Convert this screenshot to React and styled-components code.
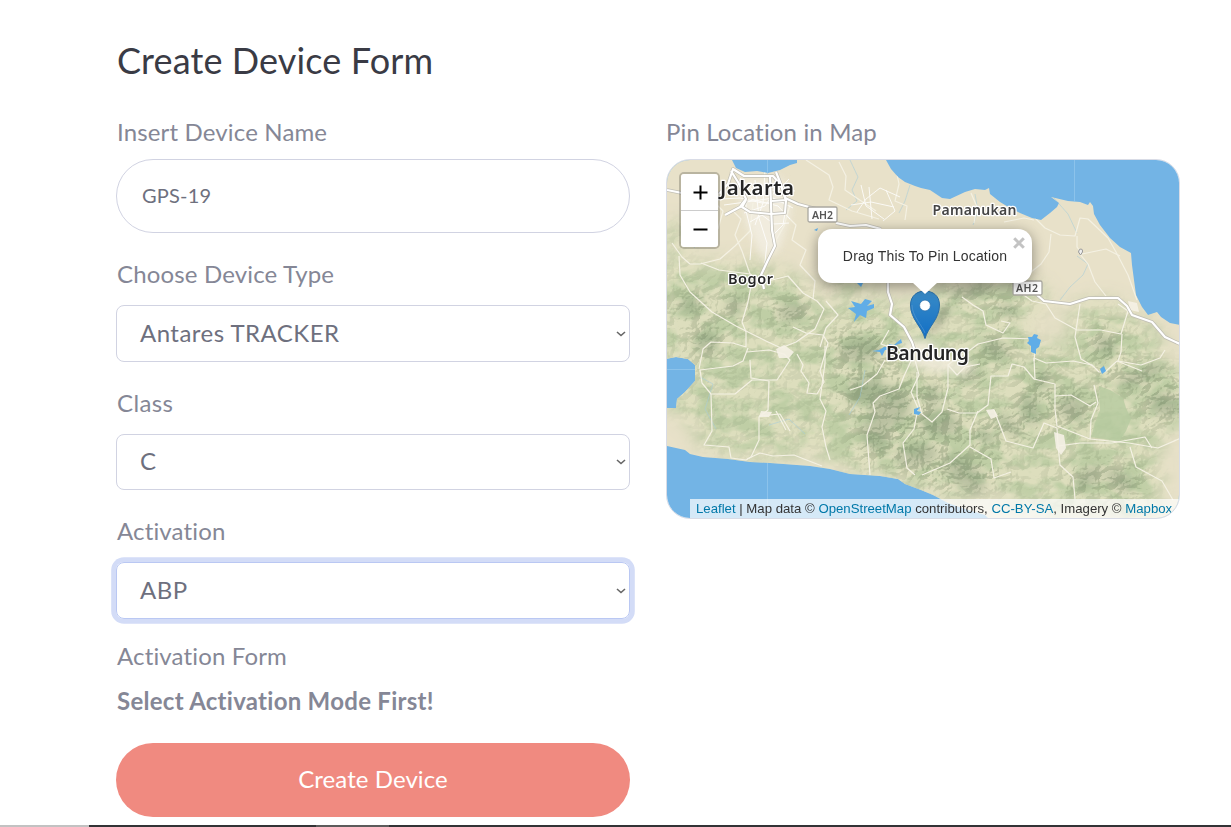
import React from "react";
import styled, { createGlobalStyle, css } from "styled-components";

const GlobalStyle = createGlobalStyle`
  * { box-sizing: border-box; }
  body { margin: 0; background: #fff; overflow: hidden; font-family: Lato, "Open Sans", sans-serif; }
`;

const Page = styled.div`
  display: flex;
  flex-direction: column;
  height: 827px;
  width: 1231px;
`;
const Main = styled.main`
  flex: 1;
  padding: 40px 51px 0 116px;
`;
const Title = styled.h1`
  margin: 0 0 39px;
  padding-left: 1px;
  font-size: 36px;
  line-height: 40px;
  font-weight: 400;
  letter-spacing: 0.12px;
  color: #3a3b45;
`;
const Columns = styled.div`
  display: grid;
  grid-template-columns: 514px 514px;
  column-gap: 36px;
  align-items: start;
`;
const Field = styled.div`
  display: flex;
  flex-direction: column;
  margin-bottom: ${(p) => p.$gap || 0}px;
`;
const Label = styled.label`
  padding: 0 0 2px ${(p) => p.$inset ?? 1}px;
  font-size: 24px;
  line-height: 26px;
  margin-bottom: ${(p) => p.$space ?? 16}px;
  letter-spacing: ${(p) => p.$track ?? 0.15}px;
  color: #858796;
`;
const NameInput = styled.input`
  height: 74px;
  border: 1px solid #d1d3e2;
  border-radius: 37px;
  padding: 0 24px 3px 25px;
  font: 400 20px Lato, sans-serif;
  letter-spacing: 0.2px;
  color: #6e707e;
  outline: none;
`;
const SelectBox = styled.div`
  display: flex;
  align-items: center;
  justify-content: space-between;
  height: ${(p) => p.$height}px;
  border: 1px solid #d1d3e2;
  border-radius: 8px;
  padding: 0 3px 0 23px;
  font-size: 24px;
  letter-spacing: 0.47px;
  color: #6e707e;
  ${(p) => p.$focused && css`
    border-color: #bac8f3;
    box-shadow: 0 0 0 4.8px #d3dcf7;
  `}
`;
const SelectValue = styled.span`
  padding-bottom: 3px;
`;
const Message = styled.strong`
  padding-left: 1px;
  font-size: 24px;
  line-height: 28px;
  letter-spacing: 0.27px;
  font-weight: 700;
  color: #858796;
`;
const SubmitButton = styled.button`
  height: 74px;
  border: 0;
  border-radius: 37px;
  background: #f08a80;
  color: #fff;
  font: 400 24px Lato, sans-serif;
  letter-spacing: 0.08px;
  padding: 0 0 3px;
`;
const MapFrame = styled.div`
  position: relative;
  width: 514px;
  height: 360px;
  border: 1px solid #d9dce6;
  border-radius: 24px;
  overflow: hidden;
  font-family: "Liberation Sans", Arial, sans-serif;
`;
const MapDrawing = styled.svg`
  display: block;
`;
const ZoomControl = styled.div`
  position: absolute;
  left: 12px;
  top: 12px;
  width: 41px;
  border: 2px solid rgba(0, 0, 0, 0.2);
  background-clip: padding-box;
  border-radius: 5px;
  overflow: hidden;
`;
const ZoomButton = styled.button`
  display: flex;
  align-items: center;
  justify-content: center;
  width: 100%;
  height: ${(p) => (p.$first ? 37 : 36)}px;
  border: 0;
  border-bottom: ${(p) => (p.$first ? "1px solid #ccc" : "0")};
  background: #fff;
  padding: 0 0 0 1px;
`;
const Popup = styled.div`
  position: absolute;
  left: 151px;
  top: 69px;
  width: 214px;
  height: 54px;
  display: flex;
  align-items: center;
  justify-content: center;
  border-radius: 14px;
  background: #fff;
  box-shadow: 0 3px 14px rgba(0, 0, 0, 0.4);
  color: #333;
  font-size: 14px;
  letter-spacing: 0.18px;
  white-space: nowrap;
`;
const PopupTip = styled.svg`
  position: absolute;
  left: 94px;
  top: 53px;
`;
const CloseIcon = styled.svg`
  position: absolute;
  right: 7px;
  top: 8px;
`;
const Attribution = styled.div`
  position: absolute;
  right: 0;
  bottom: 0;
  width: 489px;
  height: 19px;
  padding: 0 0 0 6px;
  background: rgba(255, 255, 255, 0.7);
  color: #333;
  font-size: 13.2px;
  line-height: 19px;
  white-space: nowrap;
`;
const Credit = styled.a`
  color: #0078a8;
`;
const BottomEdge = styled.footer`
  display: grid;
  grid-template-columns: 89px 227px 73px 1fr;
  height: 2px;
`;
const EdgePart = styled.div`
  background: ${(p) => p.$tone};
`;

const LAND =
  "M660 150H732V160L736 168L745 172L757 171L768 173L780 170L790 165L797 163V150H886V160L891 169L898 177L905 182L915 186L921 188L930 190L942 198L950 199L965 192L975 189L985 190L989 188L990 194L1000 202L1010 208L1020 213L1032 218L1041 220L1050 213L1057 207L1059 203L1051 197L1068 201L1080 202L1088 205L1090 202L1093 206L1094 214L1100 225L1110 238L1120 247L1131 253L1132 265L1134 280L1136 295L1142 307L1148 315L1157 312L1161 317L1170 323L1185 326V530H1000L985 515L962 508L948 503L933 495L921 490L905 484L898 479L880 476L850 474L830 469L810 466L770 463L750 462L728 459L703 457L690 454L685 450L667 446L660 444V408H676L677 399L685 392L695 381V365L688 359L676 357L660 360Z";

const greens = [
  [700, 350, 45, 75], [735, 310, 85, 48], [675, 235, 20, 12], [680, 300, 30, 45],
  [780, 318, 38, 35], [850, 280, 22, 14], [875, 345, 65, 48], [960, 318, 48, 34],
  [985, 355, 62, 35], [1010, 300, 40, 20], [1050, 390, 65, 46], [1115, 345, 48, 32],
  [1105, 410, 75, 50], [955, 440, 90, 58], [875, 415, 75, 60], [750, 385, 72, 50],
  [760, 435, 65, 24], [835, 390, 45, 60], [1060, 462, 80, 50], [1130, 480, 32, 48],
  [1100, 320, 32, 20], [830, 335, 50, 30], [1160, 395, 45, 35],
];
const peaks = [
  [735, 306, 13, 10], [792, 312, 18, 13], [707, 342, 14, 16], [690, 305, 15, 10],
  [1007, 310, 12, 9], [1105, 345, 12, 16], [1042, 380, 10, 13], [1072, 408, 18, 17],
  [1030, 410, 12, 22], [985, 436, 12, 9], [970, 375, 13, 9], [932, 396, 10, 16],
  [1008, 425, 18, 9], [970, 292, 26, 9], [890, 407, 24, 31], [875, 435, 16, 24],
  [940, 423, 24, 18], [965, 474, 32, 18], [917, 455, 26, 16], [995, 349, 18, 12],
  [1140, 376, 32, 10], [1165, 405, 20, 16], [1088, 478, 20, 12], [860, 350, 26, 17],
  [1120, 480, 20, 12], [865, 390, 25, 18],
];

const trunkRoads = [
  "M667 190L682 193", "M719 194L728 184L733 169L744 176H773L781 185L785 198L798 204L820 210",
  "M725 215L740 207L746 199L738 182L731 171", "M746 200L742 207L750 212L771 214L785 213L786 200",
  "M770 175L771 205L772 230L775 246L768 260L761 275L764 289", "M772 201L786 200L780 182L776 172",
  "M836 223L850 226L866 225L881 229", "M888 281L888 292L892 304L890 315L904 327L912 342L915 351",
  "M1037 295L1044 301L1070 304L1089 298H1118L1127 306L1132 315L1152 322L1165 337L1182 345",
];
const roads = [
  "M672 243L682 257L690 264H700L720 259L735 246L750 231L753 203", "M679 256L680 275L690 292L712 312L736 326L766 341L781 348L796 342L815 329L824 309L817 301L803 293L788 276L764 282L750 274L719 270L701 263",
  "M751 286L748 302L742 322L746 332L746 347L733 343L711 342L703 349L699 369", "M748 348L743 361L733 366L700 370L702 383L711 394H735L752 380L777 380L790 360L784 354L769 350L747 352",
  "M750 360L751 378L769 381L768 410L759 417L759 440L751 457L746 460L731 458L729 447L704 445L712 431L711 394",
  "M776 411L786 430", "M759 416L780 414L790 431", "M797 354L803 365L801 371L809 383L807 393L817 394L824 382L820 371L828 343L823 335L806 333L793 327",
  "M825 346L825 363L822 385L820 399L826 411L822 427L826 447L830 460", "M747 459L760 453L773 456L794 455L804 459L822 466",
  "M889 330L881 344L900 351L911 361L904 376L899 389L880 396L873 403L875 412L867 435L870 475",
  "M915 360L919 375L911 392L918 408L914 429L903 443L907 468L915 475", "M917 372L917 397L922 414L932 422L942 412L948 388L948 365L957 375L965 367L980 364",
  "M947 409L959 413H977L988 405L991 376L1008 376L1012 364L1024 367L1034 379L1055 384L1055 409L1057 426L1090 439L1129 443L1158 448L1181 438",
  "M978 411L970 430L970 445L950 463L922 475", "M970 447L991 459L994 478L1011 472", "M994 410L1006 441L1033 448L1044 423L1057 428L1058 445L1060 465L1073 477L1075 499",
  "M1035 380L1034 358L1046 363L1073 361L1092 365L1099 372H1105L1117 361L1142 371", "M948 365L955 359L970 350L978 344L1003 338L1036 339L1034 361",
  "M962 297L973 305L983 311L986 325L1003 333L1010 323L1001 321", "M1021 293L1032 301L1046 304L1055 318L1077 330H1101L1121 334L1128 311L1118 304",
  "M1122 334L1121 352L1118 361L1141 365L1160 358L1165 350", "M1093 366L1081 359L1075 337L1080 304", "M1035 218L1045 228L1060 235L1075 236L1080 218L1088 219L1108 238L1116 252L1128 275L1137 300",
  "M1077 236L1077 247L1082 254L1106 249L1120 256", "M1080 254L1088 264L1095 282L1106 296", "M1051 234L1049 252L1041 264L1031 272", "M1004 222L1024 218L1034 220", "M971 193L977 207L974 223",
  "M806 160L829 175L833 187L829 200L852 211L879 219", "M894 160L899 184L895 201L907 206L905 220", "M839 162L846 176L845 190L876 211",
  "M1094 385L1098 403L1091 420L1090 439", "M1055 396L1071 395L1090 406L1096 402", "M1130 447L1136 467L1162 481L1173 500",
  "M1152 448L1145 437L1112 443H1080L1058 446",
  "M885 360L877 374L862 386L850 390", "M750 274L742 251L735 235L741 219L733 211", "M785 214L796 225L792 240L806 250L800 265L815 281L813 299",
  "M790 205L784 226L775 242", "M725 185L713 201L723 211L718 229", "M826 301L838 315L826 328L820 347",
];

const cityRoads = [
  "M720 199L740 198L762 203L785 202", "M746 187V211L752 235L750 260", "M755 180L759 218L767 243L764 271",
  "M740 178L754 191L779 190L789 179", "M750 222L762 215L774 224L789 223", "M744 213L765 206L777 188L795 191",
  "M751 199L778 206L790 219", "M765 170L763 203L755 225", "M786 206L783 225L773 235", "M724 205L753 201L773 198L793 208",
  "M851 205L871 202L894 207", "M861 185L866 206L884 219", "M857 212L866 199L880 188L900 197", "M869 187L872 219", "M886 190L895 211L883 221",
];

function MapArt() {
  return (
    <MapDrawing width="512" height="358" viewBox="667 160 512 358" role="img">
      <defs>
        <clipPath id="land"><path d={LAND} /></clipPath>
        <filter id="soft" x="-40%" y="-40%" width="180%" height="180%"><feGaussianBlur stdDeviation="10" /></filter>
        <filter id="softPeak" x="-40%" y="-40%" width="180%" height="180%"><feGaussianBlur stdDeviation="4" /></filter>
        <filter id="patches" x="0" y="0" width="100%" height="100%" colorInterpolationFilters="sRGB">
          <feTurbulence type="fractalNoise" baseFrequency="0.04 0.06" numOctaves="3" seed="8" />
          <feColorMatrix values="0 0 0 0 .71  0 0 0 0 .79  0 0 0 0 .62  4 0 0 0 -1.55" />
        </filter>
        <filter id="relief" x="0" y="0" width="100%" height="100%" colorInterpolationFilters="sRGB">
          <feTurbulence type="turbulence" baseFrequency="0.04 0.05" numOctaves="4" seed="14" result="n" />
          <feColorMatrix in="n" values="0 0 0 0 0 0 0 0 0 0 0 0 0 0 0 1 0 0 0 0" result="height" />
          <feDiffuseLighting in="height" surfaceScale="9" lightingColor="#fff" result="light">
            <feDistantLight azimuth="225" elevation="48" />
          </feDiffuseLighting>
          <feColorMatrix in="light" values="0 0 0 0 .42  0 0 0 0 .49  0 0 0 0 .36  -2.5 0 0 0 1.75" />
        </filter>
        <mask id="greenMask"><g fill="#fff" filter="url(#soft)">{greens.map(([x, y, rx, ry], i) => <ellipse key={i} cx={x} cy={y} rx={rx} ry={ry} />)}</g></mask>
        <mask id="ridgeMask">
          <rect x="667" y="160" width="512" height="358" fill="#555" />
          <g fill="#fff" filter="url(#soft)">{peaks.map(([x, y, rx, ry], i) => <ellipse key={i} cx={x} cy={y} rx={rx * 1.4} ry={ry * 1.4} />)}</g>
        </mask>
        <linearGradient id="pin" x2="0" y2="1"><stop stopColor="#398bc6" /><stop offset="1" stopColor="#126fc6" /></linearGradient>
      </defs>
      <rect x="667" y="160" width="512" height="358" fill="#73b4e5" />
      <path d={LAND} fill="#e8e1c9" />
      <g clipPath="url(#land)">
        <g mask="url(#greenMask)">
          <rect x="667" y="160" width="512" height="358" fill="#dddebd" />
          <rect x="667" y="160" width="512" height="358" filter="url(#patches)" opacity=".75" />
          <g mask="url(#ridgeMask)"><rect x="667" y="160" width="512" height="358" filter="url(#relief)" opacity=".32" /></g>
        </g>
        <g fill="#718568" opacity=".32" filter="url(#softPeak)">{peaks.map(([x, y, rx, ry], i) => <ellipse key={i} cx={x} cy={y} rx={rx * 0.8} ry={ry * 0.7} transform={`rotate(${(i * 37) % 90 - 45} ${x} ${y})`} />)}</g>
        <path d="M1099 386L1110 390L1123 398L1126 408L1131 419L1126 431L1119 441L1104 439L1091 437L1096 420L1100 410Z" fill="#b7cba0" opacity=".8" />
        <path d="M735 180L781 177L791 211L779 249L763 260L747 225Z" fill="#f3efe4" opacity=".8" filter="url(#softPeak)" />
        <path d="M904 340L928 339L949 358L976 363L965 375L931 371L909 365Z" fill="#f1ebdc" opacity=".85" filter="url(#softPeak)" />
        <g fill="none" stroke="#a7cdda" strokeWidth=".8" opacity=".7">
          <path d="M850 160L858 177L852 190L857 201L846 210M910 185L905 201L899 213M1053 197L1068 214L1077 233M975 194L978 211L973 225M1077 256L1088 264L1083 275L1070 287L1060 300M700 377L713 384L705 409L716 429M769 425L789 419L805 434M865 370L860 397L849 415M705 184L697 207L705 231L694 248" />
        </g>
        <g fill="none" stroke="#f4f1e3" strokeWidth="1.2" strokeLinejoin="round">{roads.map((d, i) => <path key={i} d={d} />)}</g>
        <g fill="none" stroke="#fff" strokeWidth="1" opacity=".8">{cityRoads.map((d, i) => <path key={i} d={d} />)}</g>
        <path d="M1054 432L1064 435L1066 448L1061 455L1056 448ZM776 349L784 345L794 352L789 358L779 358ZM1128 301L1137 303L1139 312L1130 310ZM986 410L994 409L998 416L991 419ZM761 411L772 412L769 417H759Z" fill="#f5f1e6" opacity=".9" />
        <g fill="none" stroke="#c0beb4" strokeWidth="3.6" strokeLinejoin="round">{trunkRoads.map((d, i) => <path key={i} d={d} />)}</g>
        <g fill="none" stroke="#fff" strokeWidth="2.2" strokeLinejoin="round">{trunkRoads.map((d, i) => <path key={i} d={d} />)}</g>
      </g>
      <g fill="#60ade7">
        <path d="M851 301L861 304L865 299L872 301L867 306L874 304L874 308L867 311L866 318L860 315L854 322L856 314L848 308L855 307ZM857 283H863L861 287ZM1028 337L1032 337L1034 334L1038 335L1037 338L1041 340L1039 347L1036 349L1036 354L1031 352L1031 346L1027 343L1029 341ZM1100 369L1104 366L1106 371L1102 374ZM814 230L818 228L817 231Z" />
        <path d="M872 351L879 350L884 347L889 347V344L894 345L901 339L902 343L896 345L893 350L885 350L882 356L880 352ZM914 409L920 407L917 411L921 412L919 415L914 414Z" />
      </g>
      <path d="M767.5 160V174M767.5 463V518M1074.5 160V202M667 369.5H695" stroke="#9bcbee" strokeWidth=".8" opacity=".8" />
      <g fontFamily='"Noto Sans", sans-serif' fontWeight="600" fill="#252525" stroke="#fff" strokeWidth="2.5" strokeLinejoin="round" paintOrder="stroke">
        <text x="720" y="195" fontSize="20.5" textLength="74">Jakarta</text>
        <text x="728" y="284" fontSize="14.5" textLength="45">Bogor</text>
        <text x="932.5" y="215" fontSize="14" textLength="84" fill="#454545">Pamanukan</text>
        <text x="886" y="360" fontSize="19.5" textLength="83">Bandung</text>
      </g>
      <g fill="#fff" stroke="#aaa8a0" strokeWidth="1.3"><rect x="808" y="207" width="29" height="15" rx="1.5" /><rect x="1013" y="281" width="29" height="14" rx="1.5" /></g>
      <g fontFamily='"Noto Sans", sans-serif' fontWeight="600" fontSize="10.5" fill="#555"><text x="812" y="218.5" textLength="21">AH2</text><text x="1016" y="292" textLength="22">AH2</text></g>
      <path d="M1080.5 255L1078.5 252Q1079 248.500 1081 249Q1083 249 1082.500 252Z" fill="#eee" stroke="#999" />
      <path d="M926 337Q945 324 949 305Q941 307 937 318Z" fill="#333" opacity=".35" filter="url(#softPeak)" />
      <path d="M925 338.5C922 327 910.5 319 910.5 305C910.5 296 917 291 925 291S939.5 296 939.5 305C939.5 319 928 327 925 338.5Z" fill="url(#pin)" stroke="#286da8" />
      <path d="M925 333C922 325 912 316 912 305" fill="none" stroke="#65a2d3" opacity=".5" />
      <circle cx="925" cy="305.5" r="5.4" fill="#fff" stroke="#296fab" strokeWidth=".7" />
    </MapDrawing>
  );
}

function Select({ children, ...props }) {
  return (
    <SelectBox {...props}>
      <SelectValue>{children}</SelectValue>
      <svg width="10" height="8" viewBox="0 0 10 8"><path d="M1 2L5 5.5L9 2" fill="none" stroke="#666" strokeWidth="1.6" /></svg>
    </SelectBox>
  );
}

export default function App() {
  return (
    <Page>
      <GlobalStyle />
      <Main>
        <Title>Create Device Form</Title>
        <Columns>
          <div>
            <Field $gap={28}><Label $space={12}>Insert Device Name</Label><NameInput defaultValue="GPS-19" /></Field>
            <Field $gap={28}><Label>Choose Device Type</Label><Select $height={57}>Antares TRACKER</Select></Field>
            <Field $gap={28}><Label $track={0.4}>Class</Label><Select $height={56}>C</Select></Field>
            <Field $gap={24}><Label>Activation</Label><Select $height={57} $focused>ABP</Select></Field>
            <Field $gap={28}><Label>Activation Form</Label><Message>Select Activation Mode First!</Message></Field>
            <Field><SubmitButton>Create Device</SubmitButton></Field>
          </div>
          <Field>
            <Label $space={12} $inset={0}>Pin Location in Map</Label>
            <MapFrame>
              <MapArt />
              <ZoomControl>
                <ZoomButton $first><svg width="15" height="15" viewBox="0 0 15 15"><path d="M0.5 7.5H14.5M7.5 0.5V14.5" stroke="#000" strokeWidth="2" /></svg></ZoomButton>
                <ZoomButton><svg width="15" height="15" viewBox="0 0 15 15"><path d="M0.5 7.5H14.5" stroke="#000" strokeWidth="2" /></svg></ZoomButton>
              </ZoomControl>
              <Popup>
                Drag This To Pin Location
                <CloseIcon width="12" height="12" viewBox="0 0 12 12"><path d="M1.2 1.2L10.8 10.8M10.8 1.2L1.2 10.8" stroke="#c3c3c3" strokeWidth="3" /></CloseIcon>
                <PopupTip width="26" height="13" viewBox="0 0 26 13"><path d="M0 0H26L13 12Z" fill="#fff" /></PopupTip>
              </Popup>
              <Attribution><Credit>Leaflet</Credit> | Map data © <Credit>OpenStreetMap</Credit> contributors, <Credit>CC-BY-SA</Credit>, Imagery © <Credit>Mapbox</Credit></Attribution>
            </MapFrame>
          </Field>
        </Columns>
      </Main>
      <BottomEdge><EdgePart $tone="#c2c2c2" /><EdgePart $tone="#333335" /><EdgePart $tone="#5c5b5b" /><EdgePart $tone="#333335" /></BottomEdge>
    </Page>
  );
}
